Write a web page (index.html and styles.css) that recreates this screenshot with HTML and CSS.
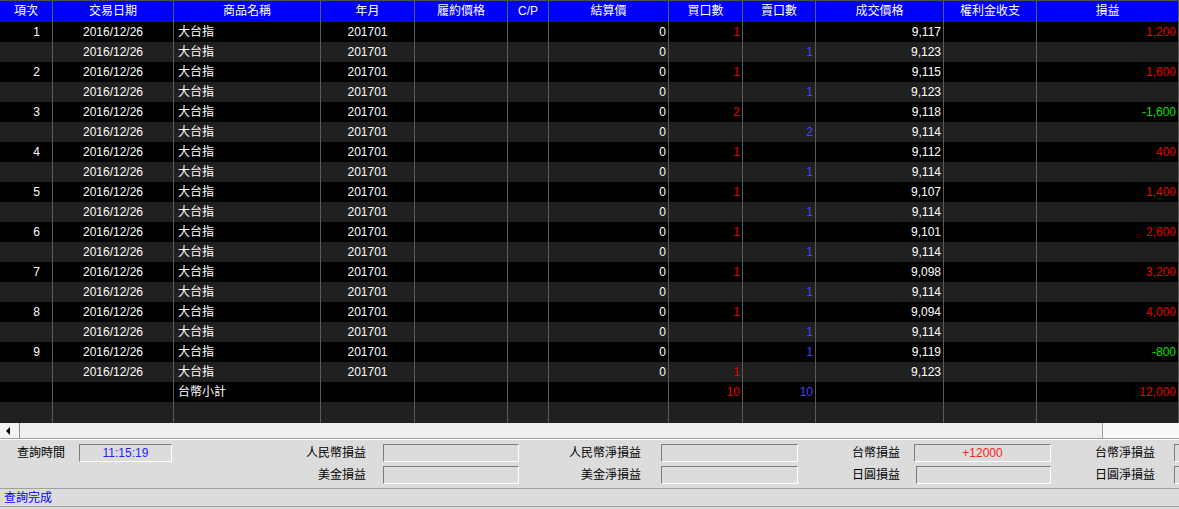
FILE: index.html
```html
<!DOCTYPE html>
<html lang="zh-Hant">
<head>
<meta charset="utf-8">
<title>損益查詢</title>
<link rel="stylesheet" href="styles.css">
</head>
<body>
<div class="grid">
  <div class="row head">
    <div>項次</div><div>交易日期</div><div>商品名稱</div><div>年月</div><div>履約價格</div><div>C/P</div><div>結算價</div><div>買口數</div><div>賣口數</div><div>成交價格</div><div>權利金收支</div><div>損益</div>
  </div>
  <div class="row odd"><div class="no">1</div><div class="c">2016/12/26</div><div class="l">大台指</div><div class="c">201701</div><div></div><div></div><div class="r">0</div><div class="r red">1</div><div class="r"></div><div class="r">9,117</div><div></div><div class="r red">1,200</div></div>
  <div class="row even"><div class="no"></div><div class="c">2016/12/26</div><div class="l">大台指</div><div class="c">201701</div><div></div><div></div><div class="r">0</div><div class="r"></div><div class="r blue">1</div><div class="r">9,123</div><div></div><div class="r"></div></div>
  <div class="row odd"><div class="no">2</div><div class="c">2016/12/26</div><div class="l">大台指</div><div class="c">201701</div><div></div><div></div><div class="r">0</div><div class="r red">1</div><div class="r"></div><div class="r">9,115</div><div></div><div class="r red">1,600</div></div>
  <div class="row even"><div class="no"></div><div class="c">2016/12/26</div><div class="l">大台指</div><div class="c">201701</div><div></div><div></div><div class="r">0</div><div class="r"></div><div class="r blue">1</div><div class="r">9,123</div><div></div><div class="r"></div></div>
  <div class="row odd"><div class="no">3</div><div class="c">2016/12/26</div><div class="l">大台指</div><div class="c">201701</div><div></div><div></div><div class="r">0</div><div class="r red">2</div><div class="r"></div><div class="r">9,118</div><div></div><div class="r green">-1,600</div></div>
  <div class="row even"><div class="no"></div><div class="c">2016/12/26</div><div class="l">大台指</div><div class="c">201701</div><div></div><div></div><div class="r">0</div><div class="r"></div><div class="r blue">2</div><div class="r">9,114</div><div></div><div class="r"></div></div>
  <div class="row odd"><div class="no">4</div><div class="c">2016/12/26</div><div class="l">大台指</div><div class="c">201701</div><div></div><div></div><div class="r">0</div><div class="r red">1</div><div class="r"></div><div class="r">9,112</div><div></div><div class="r red">400</div></div>
  <div class="row even"><div class="no"></div><div class="c">2016/12/26</div><div class="l">大台指</div><div class="c">201701</div><div></div><div></div><div class="r">0</div><div class="r"></div><div class="r blue">1</div><div class="r">9,114</div><div></div><div class="r"></div></div>
  <div class="row odd"><div class="no">5</div><div class="c">2016/12/26</div><div class="l">大台指</div><div class="c">201701</div><div></div><div></div><div class="r">0</div><div class="r red">1</div><div class="r"></div><div class="r">9,107</div><div></div><div class="r red">1,400</div></div>
  <div class="row even"><div class="no"></div><div class="c">2016/12/26</div><div class="l">大台指</div><div class="c">201701</div><div></div><div></div><div class="r">0</div><div class="r"></div><div class="r blue">1</div><div class="r">9,114</div><div></div><div class="r"></div></div>
  <div class="row odd"><div class="no">6</div><div class="c">2016/12/26</div><div class="l">大台指</div><div class="c">201701</div><div></div><div></div><div class="r">0</div><div class="r red">1</div><div class="r"></div><div class="r">9,101</div><div></div><div class="r red">2,600</div></div>
  <div class="row even"><div class="no"></div><div class="c">2016/12/26</div><div class="l">大台指</div><div class="c">201701</div><div></div><div></div><div class="r">0</div><div class="r"></div><div class="r blue">1</div><div class="r">9,114</div><div></div><div class="r"></div></div>
  <div class="row odd"><div class="no">7</div><div class="c">2016/12/26</div><div class="l">大台指</div><div class="c">201701</div><div></div><div></div><div class="r">0</div><div class="r red">1</div><div class="r"></div><div class="r">9,098</div><div></div><div class="r red">3,200</div></div>
  <div class="row even"><div class="no"></div><div class="c">2016/12/26</div><div class="l">大台指</div><div class="c">201701</div><div></div><div></div><div class="r">0</div><div class="r"></div><div class="r blue">1</div><div class="r">9,114</div><div></div><div class="r"></div></div>
  <div class="row odd"><div class="no">8</div><div class="c">2016/12/26</div><div class="l">大台指</div><div class="c">201701</div><div></div><div></div><div class="r">0</div><div class="r red">1</div><div class="r"></div><div class="r">9,094</div><div></div><div class="r red">4,000</div></div>
  <div class="row even"><div class="no"></div><div class="c">2016/12/26</div><div class="l">大台指</div><div class="c">201701</div><div></div><div></div><div class="r">0</div><div class="r"></div><div class="r blue">1</div><div class="r">9,114</div><div></div><div class="r"></div></div>
  <div class="row odd"><div class="no">9</div><div class="c">2016/12/26</div><div class="l">大台指</div><div class="c">201701</div><div></div><div></div><div class="r">0</div><div class="r"></div><div class="r blue">1</div><div class="r">9,119</div><div></div><div class="r green">-800</div></div>
  <div class="row even"><div class="no"></div><div class="c">2016/12/26</div><div class="l">大台指</div><div class="c">201701</div><div></div><div></div><div class="r">0</div><div class="r red">1</div><div class="r"></div><div class="r">9,123</div><div></div><div class="r"></div></div>
  <div class="row odd"><div class="no"></div><div class="c"></div><div class="l">台幣小計</div><div class="c"></div><div></div><div></div><div class="r"></div><div class="r red">10</div><div class="r blue">10</div><div class="r"></div><div></div><div class="r red">12,000</div></div>
  <div class="row even last"><div></div><div></div><div></div><div></div><div></div><div></div><div></div><div></div><div></div><div></div><div></div><div></div></div>
</div>
<div class="hscroll">
  <div class="sbtn"><svg width="4" height="8" viewBox="0 0 4 8"><polygon points="4,0 0,4 4,8" fill="#000"/></svg></div>
  <div class="strack"></div>
  <div class="srest"></div>
</div>
<div class="panel">
  <div class="prow">
    <div class="lab first">查詢時間</div><div class="box blue2">11:15:19</div>
    <div class="lab lb">人民幣損益</div><div class="box"></div>
    <div class="lab lc">人民幣淨損益</div><div class="box"></div>
    <div class="lab ld">台幣損益</div><div class="box red2">+12000</div>
    <div class="lab le">台幣淨損益</div><div class="box"></div>
  </div>
  <div class="prow">
    <div class="lab first"></div><div class="spacer"></div>
    <div class="lab lb">美金損益</div><div class="box"></div>
    <div class="lab lc">美金淨損益</div><div class="box"></div>
    <div class="lab ld">日圓損益</div><div class="box shift">&nbsp;</div>
    <div class="lab le">日圓淨損益</div><div class="box"></div>
  </div>
</div>
<div class="status">查詢完成</div>
</body>
</html>
```

FILE: styles.css
```css
html, body {
  margin: 0;
  padding: 0;
}
body {
  width: 1179px;
  height: 509px;
  overflow: hidden;
  background: #dcdcdc;
  font-family: "Liberation Sans", "Noto Sans CJK TC", sans-serif;
  font-size: 12px;
  color: #000;
}
.grid {
  background: #000;
  border-top: 1px solid #505050;
}
.row {
  display: grid;
  grid-template-columns: 53px 121px 147px 94px 93px 41px 120px 74px 73px 128px 93px 142px;
  height: 20px;
  color: #fff;
}
.row > div {
  box-sizing: border-box;
  border-right: 1px solid #5a5a5a;
  line-height: 20px;
  white-space: nowrap;
  overflow: hidden;
}
.head {
  background: #0000ff;
  height: 21px;
}
.head > div {
  text-align: center;
  line-height: 21px;
}
.odd { background: #000; }
.even { background: #202020; }
.last { height: 21px; }
.no { text-align: right; padding-right: 12px; }
.c { text-align: center; }
.l { text-align: left; padding-left: 4px; }
.r { text-align: right; padding-right: 2px; }
.red { color: #e80000; }
.blue { color: #4444ff; }
.green { color: #00e400; }

.hscroll {
  display: flex;
  height: 15px;
  background: #f0f0f0;
  border-bottom: 1px solid #a0a0a0;
}
.sbtn {
  width: 20px;
  border-right: 1px solid #8a8a8a;
  background: #f4f4f4;
  display: flex;
  align-items: center;
  padding-left: 6px;
  box-sizing: border-box;
}
.sbtn svg { display: block; }
.strack {
  width: 1082px;
  background: #efefef;
  border-right: 1px solid #a0a0a0;
}
.srest {
  flex: 1;
  background: #f8f8f8;
}

.panel {
  height: 49px;
  box-sizing: border-box;
  border-top: 1px solid #ffffff;
  padding-top: 4px;
  overflow: hidden;
  display: flex;
  flex-direction: column;
  gap: 4px;
}
.prow {
  display: grid;
  grid-template-columns: 79px 93px 211px 136px 142px 137px 116px 137px 123px 137px;
  height: 18px;
}
.lab {
  line-height: 18px;
  white-space: nowrap;
  text-align: right;
}
.lab.first { text-align: left; padding-left: 17px; }
.lb { padding-right: 17px; }
.lc { padding-right: 20px; }
.ld { padding-right: 14px; }
.le { padding-right: 19px; }
.box {
  box-sizing: border-box;
  border-top: 1px solid #7c7c7c;
  border-left: 1px solid #7c7c7c;
  border-right: 1px solid #ffffff;
  border-bottom: 1px solid #ffffff;
  text-align: center;
  line-height: 16px;
}
.box.shift { margin-left: 2px; }
.blue2 { color: #2222ff; }
.red2 { color: #ff2020; }

.status {
  height: 19px;
  box-sizing: border-box;
  border-top: 1px solid #a0a0a0;
  border-bottom: 1px solid #a0a0a0;
  line-height: 18px;
  padding-left: 4px;
  color: #0000ff;
}
```
